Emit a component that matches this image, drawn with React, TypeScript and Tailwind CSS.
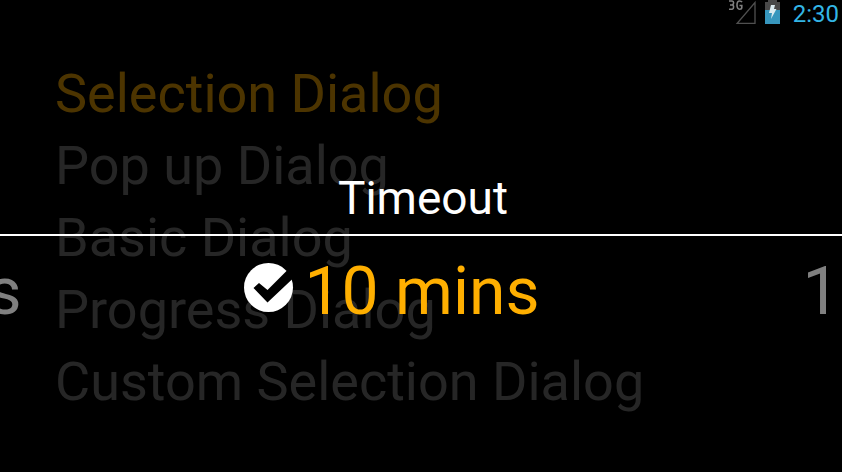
const dialogs = [
  "Selection Dialog",
  "Pop up Dialog",
  "Basic Dialog",
  "Progress Dialog",
  "Custom Selection Dialog",
];

function SignalIcon() {
  return (
    <svg className="h-6 w-7" viewBox="0 0 28 24" aria-label="3G signal" role="img">
      <path d="M8 23.5H26V2.5Z" fill="none" stroke="#505050" strokeWidth="1.3" />
      <path
        d="M0 1H3.2Q4.6 1 4.6 2.8T3.2 5H1M3.2 5Q4.6 5 4.6 7T3.2 9.2H0M13 2.2Q12.4 1 10.6 1Q8 1 8 5T10.6 9.2Q12.8 9.2 12.8 7.5V5.5H10.5"
        fill="none"
        stroke="#808080"
        strokeWidth="1.6"
      />
    </svg>
  );
}

function BatteryIcon() {
  return (
    <svg className="h-6 w-4" viewBox="0 0 16 24" aria-label="Battery charging" role="img">
      <path d="M3 0H12V2H15V10H0V2H3Z" fill="#484848" />
      <path d="M0 10H15V24H0Z" fill="#3796bd" />
      <path d="M6 5H10L9 9H11.5L6 19L7 13H4Z" fill="#dcebf0" />
    </svg>
  );
}

function CheckIcon() {
  return (
    <svg className="size-[50px]" viewBox="0 0 50 50" aria-hidden="true">
      <circle cx="24.5" cy="24.5" r="24.5" fill="#fff" />
      <path d="M9.5 25L15 20L23.5 27L45 5.5L52 12.5L23.5 39.5Z" fill="#000" />
    </svg>
  );
}

export default function App() {
  return (
    <div className="relative min-h-screen overflow-hidden bg-black font-[Roboto,sans-serif]">
      <main className="pt-[58px] pl-[55px]">
        <ul>
          {dialogs.map((name, i) => (
            <li key={name}>
              <button
                type="button"
                className={`block text-[54px] leading-[72px] whitespace-nowrap ${i === 0 ? "text-[#ffaf00]" : "text-[#808080]"}`}
              >
                {name}
              </button>
            </li>
          ))}
        </ul>
      </main>

      <div role="dialog" aria-labelledby="dialog-title" className="absolute inset-0 bg-black/70 pt-[162px]">
        <h1
          id="dialog-title"
          className="border-b-2 border-white pl-1 text-center text-[46px] leading-[72px] text-white"
        >
          Timeout
        </h1>
        <div className="grid grid-cols-[minmax(0,1fr)_auto_minmax(0,1fr)] pt-[11px] pl-[2px] text-[66px] leading-[90px] whitespace-nowrap text-[#808080]">
          <div className="flex justify-end pr-[283px]">
            <button type="button">5 mins</button>
          </div>
          <button type="button" aria-pressed="true" className="relative text-[#ffaf00]">
            <span className="absolute top-4 right-full pr-[11px]">
              <CheckIcon />
            </span>
            10 mins
          </button>
          <div className="flex pl-[263px]">
            <button type="button">15 mins</button>
          </div>
        </div>
      </div>

      <header className="absolute top-0 right-0 flex items-start gap-2 pr-[3px] text-[24px] leading-[28px] text-[#33b5e5]">
        <SignalIcon />
        <BatteryIcon />
        <time className="pl-1">2:30</time>
      </header>
    </div>
  );
}
